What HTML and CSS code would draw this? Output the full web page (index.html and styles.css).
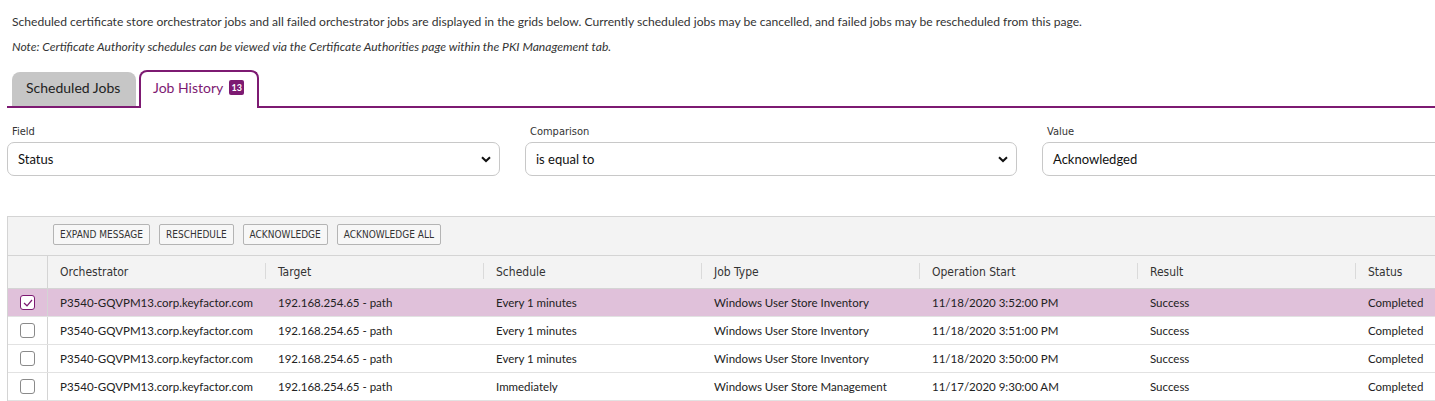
FILE: index.html
```html
<!DOCTYPE html>
<html>
<head>
<meta charset="utf-8">
<link rel="stylesheet" href="styles.css">
</head>
<body>
<div class="page">
  <p class="intro">Scheduled certificate store orchestrator jobs and all failed orchestrator jobs are displayed in the grids below. Currently scheduled jobs may be cancelled, and failed jobs may be rescheduled from this page.</p>
  <p class="note">Note: Certificate Authority schedules can be viewed via the Certificate Authorities page within the PKI Management tab.</p>

  <div class="tabs">
    <div class="tab">Scheduled Jobs</div>
    <div class="tab active">Job History <span class="badge">13</span></div>
  </div>

  <div class="filters">
    <div class="filter">
      <label class="flabel">Field</label>
      <div class="box"><span>Status</span><svg class="chev" width="10" height="7" viewBox="0 0 10 7"><path d="M1 1.2 L5 5 L9 1.2" fill="none" stroke="#111" stroke-width="2"/></svg></div>
    </div>
    <div class="filter">
      <label class="flabel">Comparison</label>
      <div class="box"><span>is equal to</span><svg class="chev" width="10" height="7" viewBox="0 0 10 7"><path d="M1 1.2 L5 5 L9 1.2" fill="none" stroke="#111" stroke-width="2"/></svg></div>
    </div>
    <div class="filter">
      <label class="flabel">Value</label>
      <div class="box"><span>Acknowledged</span></div>
    </div>
  </div>

  <div class="grid">
    <div class="toolbar">
      <button class="btn">EXPAND MESSAGE</button>
      <button class="btn">RESCHEDULE</button>
      <button class="btn">ACKNOWLEDGE</button>
      <button class="btn">ACKNOWLEDGE ALL</button>
    </div>
    <div class="row head">
      <div class="cb-cell"></div>
      <div class="cell">Orchestrator</div>
      <div class="cell">Target</div>
      <div class="cell">Schedule</div>
      <div class="cell">Job Type</div>
      <div class="cell">Operation Start</div>
      <div class="cell">Result</div>
      <div class="cell">Status</div>
    </div>
    <div class="row sel">
      <div class="cb-cell"><span class="cb checked"><svg width="10" height="8" viewBox="0 0 10 8"><path d="M1 4 L4 6.8 L9 1" fill="none" stroke="#7d1a72" stroke-width="1.2"/></svg></span></div>
      <div class="cell">P3540-GQVPM13.corp.keyfactor.com</div>
      <div class="cell">192.168.254.65 - path</div>
      <div class="cell">Every 1 minutes</div>
      <div class="cell">Windows User Store Inventory</div>
      <div class="cell">11/18/2020 3:52:00 PM</div>
      <div class="cell">Success</div>
      <div class="cell">Completed</div>
    </div>
    <div class="row">
      <div class="cb-cell"><span class="cb"></span></div>
      <div class="cell">P3540-GQVPM13.corp.keyfactor.com</div>
      <div class="cell">192.168.254.65 - path</div>
      <div class="cell">Every 1 minutes</div>
      <div class="cell">Windows User Store Inventory</div>
      <div class="cell">11/18/2020 3:51:00 PM</div>
      <div class="cell">Success</div>
      <div class="cell">Completed</div>
    </div>
    <div class="row">
      <div class="cb-cell"><span class="cb"></span></div>
      <div class="cell">P3540-GQVPM13.corp.keyfactor.com</div>
      <div class="cell">192.168.254.65 - path</div>
      <div class="cell">Every 1 minutes</div>
      <div class="cell">Windows User Store Inventory</div>
      <div class="cell">11/18/2020 3:50:00 PM</div>
      <div class="cell">Success</div>
      <div class="cell">Completed</div>
    </div>
    <div class="row">
      <div class="cb-cell"><span class="cb"></span></div>
      <div class="cell">P3540-GQVPM13.corp.keyfactor.com</div>
      <div class="cell">192.168.254.65 - path</div>
      <div class="cell">Immediately</div>
      <div class="cell">Windows User Store Management</div>
      <div class="cell">11/17/2020 9:30:00 AM</div>
      <div class="cell">Success</div>
      <div class="cell">Completed</div>
    </div>
  </div>
</div>
</body>
</html>
```

FILE: styles.css
```css
html, body {
  margin: 0;
  padding: 0;
  background: #fff;
  overflow: hidden;
}
body {
  font-family: "Lato", "Liberation Sans", sans-serif;
  color: #222;
  font-size: 12px;
}
.page {
  width: 1580px;
  padding: 0 0 0 7px;
}
.intro, .note {
  margin: 0;
  padding-left: 5px;
  font-size: 12.1px;
  line-height: 14px;
  color: #333;
}
.intro { padding-top: 15px; }
.note { padding-top: 11px; font-style: italic; }

.tabs {
  margin-top: 16px;
  display: flex;
  align-items: flex-end;
  gap: 3px;
  padding-left: 5px;
  border-bottom: 2px solid #7d1a72;
  height: 36px;
}
.tab {
  height: 34px;
  box-sizing: border-box;
  width: 124px;
  background: #c6c6c6;
  border-radius: 8px 8px 0 0;
  font-size: 14px;
  color: #222;
  padding-left: 14px;
  padding-bottom: 3px;
  display: flex;
  align-items: center;
}
.tab.active {
  height: 38px;
  width: 120px;
  margin-bottom: -2px;
  background: #fff;
  border: 2px solid #7d1a72;
  border-bottom: none;
  color: #7d1a72;
  padding-left: 12px;
  padding-bottom: 5px;
}
.badge {
  display: inline-block;
  margin-left: 6px;
  background: #7d1a72;
  color: #fff;
  font-size: 9px;
  font-weight: 700;
  width: 15px;
  height: 15px;
  line-height: 15px;
  text-align: center;
  border-radius: 2px;
}

.filters {
  margin-top: 14px;
  display: grid;
  grid-template-columns: 493px 492px 493px;
  gap: 25px;
}
.flabel {
  display: block;
  font-family: "DejaVu Sans Condensed", "DejaVu Sans", sans-serif;
  font-size: 11px;
  color: #333;
  padding-left: 5px;
  height: 18px;
  line-height: 20px;
}
.box {
  margin-top: 2px;
  height: 34px;
  box-sizing: border-box;
  border: 1px solid #c8c8c8;
  border-radius: 7px;
  display: flex;
  align-items: center;
  justify-content: space-between;
  padding: 0 8px 0 10px;
  font-size: 13px;
  color: #111;
}

.grid {
  margin-top: 40px;
  border-top: 1px solid #d4d4d4;
  border-left: 1px solid #d4d4d4;
}
.toolbar {
  background: #f3f3f3;
  height: 39px;
  box-sizing: border-box;
  display: flex;
  align-items: flex-start;
  gap: 9px;
  padding: 7px 0 0 45px;
  border-bottom: 1px solid #d4d4d4;
}
.btn {
  height: 21px;
  padding: 0 6px;
  border: 1px solid #b4b4b4;
  border-radius: 2px;
  background: #f7f7f7;
  font-family: "DejaVu Sans Condensed", "DejaVu Sans", sans-serif;
  font-size: 10px;
  color: #333;
  margin: 0;
}
.row {
  display: grid;
  grid-template-columns: 40px repeat(7, 218px);
  height: 27px;
  border-bottom: 1px solid #e2e2e2;
  font-size: 11.5px;
  color: #222;
}
.row.head {
  background: #f3f3f3;
  height: 32px;
  border-bottom: 1px solid #d4d4d4;
  font-family: "DejaVu Sans Condensed", "DejaVu Sans", sans-serif;
  font-size: 12px;
  color: #333;
}
.row.sel { background: #e0c1da; height: 27px; }
.cb-cell {
  border-right: 1px solid #d4d4d4;
  display: flex;
  align-items: center;
  justify-content: center;
}
.cell {
  display: flex;
  align-items: center;
  padding-left: 12px;
  white-space: nowrap;
}
.row.head .cell { position: relative; }
.row.head .cell + .cell::before {
  content: "";
  position: absolute;
  left: -1px;
  top: 7px;
  height: 16px;
  border-left: 1px solid #dadada;
}
.cb {
  width: 15px;
  height: 15px;
  box-sizing: border-box;
  border: 1px solid #8a8a8a;
  border-radius: 3px;
  background: #fff;
  display: flex;
  align-items: center;
  justify-content: center;
}
.cb.checked { border-color: #7d1a72; }
```
